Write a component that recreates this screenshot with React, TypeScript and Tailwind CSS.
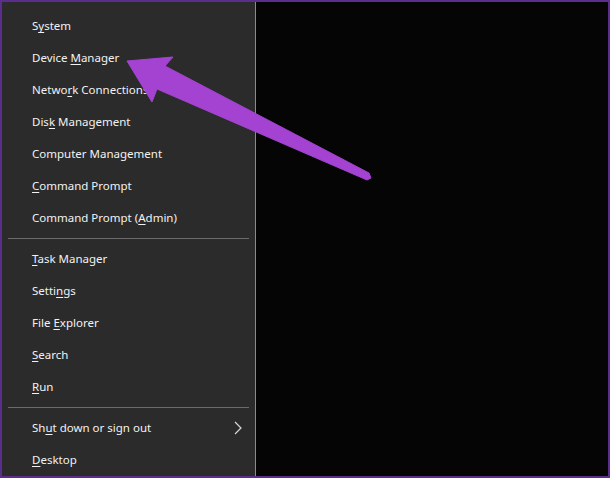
const groups: { label: string; key: number; arrow?: boolean }[][] = [
  [
    { label: "System", key: 1 },
    { label: "Device Manager", key: 7 },
    { label: "Network Connections", key: 5 },
    { label: "Disk Management", key: 3 },
    { label: "Computer Management", key: -1 },
    { label: "Command Prompt", key: 0 },
    { label: "Command Prompt (Admin)", key: 16 },
  ],
  [
    { label: "Task Manager", key: 0 },
    { label: "Settings", key: 5 },
    { label: "File Explorer", key: 5 },
    { label: "Search", key: 0 },
    { label: "Run", key: 0 },
  ],
  [
    { label: "Shut down or sign out", key: 2, arrow: true },
    { label: "Desktop", key: 0 },
  ],
]

const Label = ({ text, k }: { text: string; k: number }) => {
  if (k < 0) return <span>{text}</span>
  return (
    <span>
      {text.slice(0, k)}
      <span className="underline underline-offset-2">{text[k]}</span>
      {text.slice(k + 1)}
    </span>
  )
}

export default function App() {
  return (
    <div className="relative w-[610px] h-[478px] bg-[#5b2d8e] pt-[2px] pl-[2px] pr-[2px] pb-[2px] overflow-hidden font-['Noto_Sans',sans-serif]">
      <div className="flex h-full bg-[#050505]">
        <div className="w-[254px] h-full bg-[#2b2b2b] border-r border-[#8a8a8a] pt-[8px]">
          {groups.map((g, gi) => (
            <div key={gi}>
              {gi > 0 && <div className="mx-[6px] my-[4px] h-px bg-[#6b6b6b]" />}
              {g.map((it) => (
                <div
                  key={it.label}
                  className="h-[32px] flex items-center justify-between pl-[30px] pr-[13px] text-[11.5px] text-[#f2f2f2]"
                >
                  <Label text={it.label} k={it.key} />
                  {it.arrow && (
                    <svg width="8" height="14" viewBox="0 0 8 14" className="text-[#d8d8d8]">
                      <path d="M1 1 L7 7 L1 13" fill="none" stroke="currentColor" strokeWidth="1.2" />
                    </svg>
                  )}
                </div>
              ))}
            </div>
          ))}
        </div>
        <div className="flex-1" />
      </div>
      <svg className="absolute left-0 top-0 pointer-events-none" width="610" height="478" viewBox="0 0 610 478">
        <polygon
          points="127,61 173,57 165,66 369,173 371,178 367,180 157,89 152,102"
          fill="#a443d2"
          stroke="#a443d2"
          strokeLinejoin="round"
          strokeWidth="1"
        />
      </svg>
    </div>
  )
}
